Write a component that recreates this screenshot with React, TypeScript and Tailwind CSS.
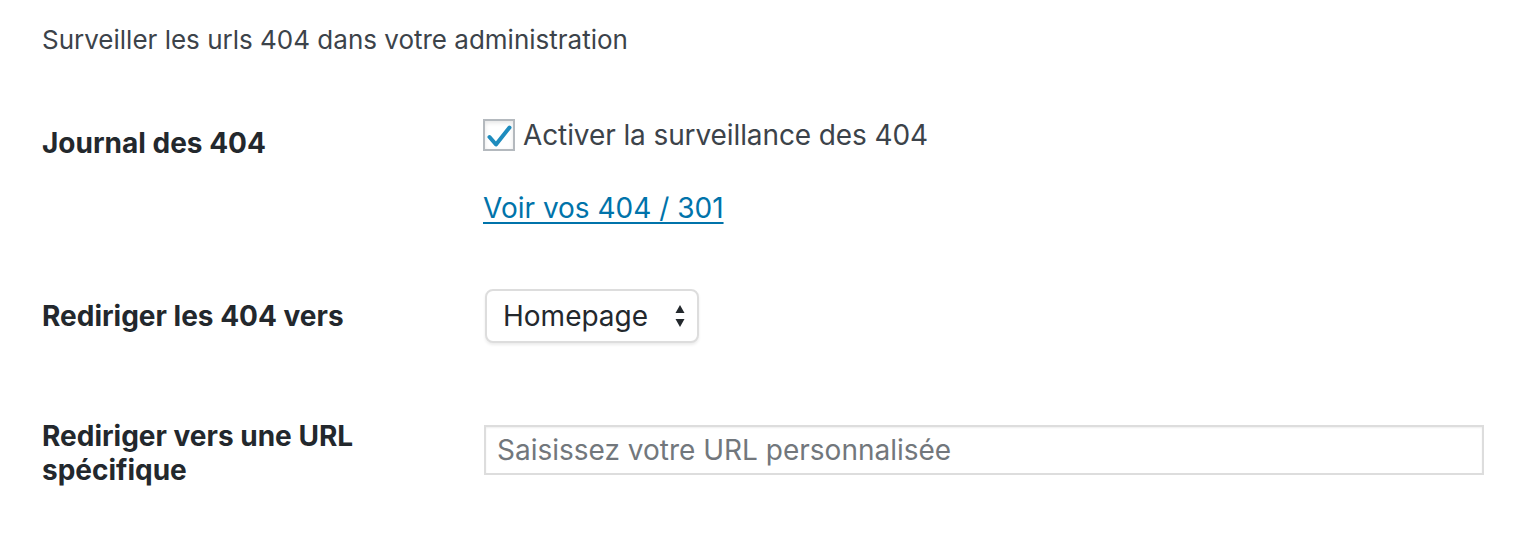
import { useState } from "react";

const font = { fontFamily: "Inter, 'Liberation Sans', sans-serif" };

function CheckIcon() {
  return (
    <svg viewBox="0 0 28 28" className="w-[28px] h-[28px]">
      <path
        d="M4.5 16 L11 23.5 L24.5 6.5"
        fill="none"
        stroke="#1e8cbe"
        strokeWidth="4"
        strokeLinecap="round"
        strokeLinejoin="round"
      />
    </svg>
  );
}

function SelectArrows() {
  return (
    <svg viewBox="0 0 10 24" className="w-[10px] h-[24px]">
      <path d="M5 1 L9.5 9 L0.5 9 Z" fill="#23282d" />
      <path d="M5 23 L9.5 15 L0.5 15 Z" fill="#23282d" />
    </svg>
  );
}

export default function App() {
  const [checked, setChecked] = useState(true);

  return (
    <div className="w-[1532px] h-[542px] bg-white pl-[42px] pt-[22px]" style={font}>
      <p className="text-[26px] leading-[36px] text-[#3c434a]">
        Surveiller les urls 404 dans votre administration
      </p>

      <div className="mt-[59px] flex">
        <div className="w-[441px] pt-[8px] text-[28px] leading-[36px] font-bold text-[#23282d]">
          Journal des 404
        </div>
        <div className="flex flex-col">
          <label className="flex items-center gap-[8px] text-[28px] leading-[36px] text-[#3c434a] tracking-[-0.1px]">
            <span
              onClick={() => setChecked(!checked)}
              className="w-[32px] h-[32px] border-2 border-[#b4b9be] bg-white shadow-[inset_0_2px_4px_rgba(0,0,0,0.1)] flex items-center justify-center"
            >
              {checked && <CheckIcon />}
            </span>
            Activer la surveillance des 404
          </label>
          <a href="#" className="mt-[37px] text-[28px] leading-[36px] text-[#0073aa] underline underline-offset-[4px] decoration-2">
            Voir vos 404 / 301
          </a>
        </div>
      </div>

      <div className="mt-[63px] flex items-center">
        <div className="w-[443px] text-[28px] leading-[36px] font-bold text-[#23282d]">
          Rediriger les 404 vers
        </div>
        <div className="w-[214px] h-[54px] rounded-[8px] border-2 border-[#dddddd] bg-white shadow-[0_2px_3px_rgba(0,0,0,0.08)] flex items-center justify-between pl-[16px] pr-[12px] text-[28px] text-[#23282d]">
          <span>Homepage</span>
          <SelectArrows />
        </div>
      </div>

      <div className="mt-[76px] flex">
        <div className="w-[442px] text-[28px] leading-[34px] font-bold text-[#23282d]">
          Rediriger vers une URL
          <br />
          spécifique
        </div>
        <input
          placeholder="Saisissez votre URL personnalisée"
          className="mt-[6px] w-[1000px] h-[50px] border-2 border-[#dddddd] bg-white shadow-[inset_0_1px_2px_rgba(0,0,0,0.07)] px-[11px] text-[28px] text-[#32373c] placeholder:text-[#72777c] outline-none"
          style={font}
        />
      </div>
    </div>
  );
}
